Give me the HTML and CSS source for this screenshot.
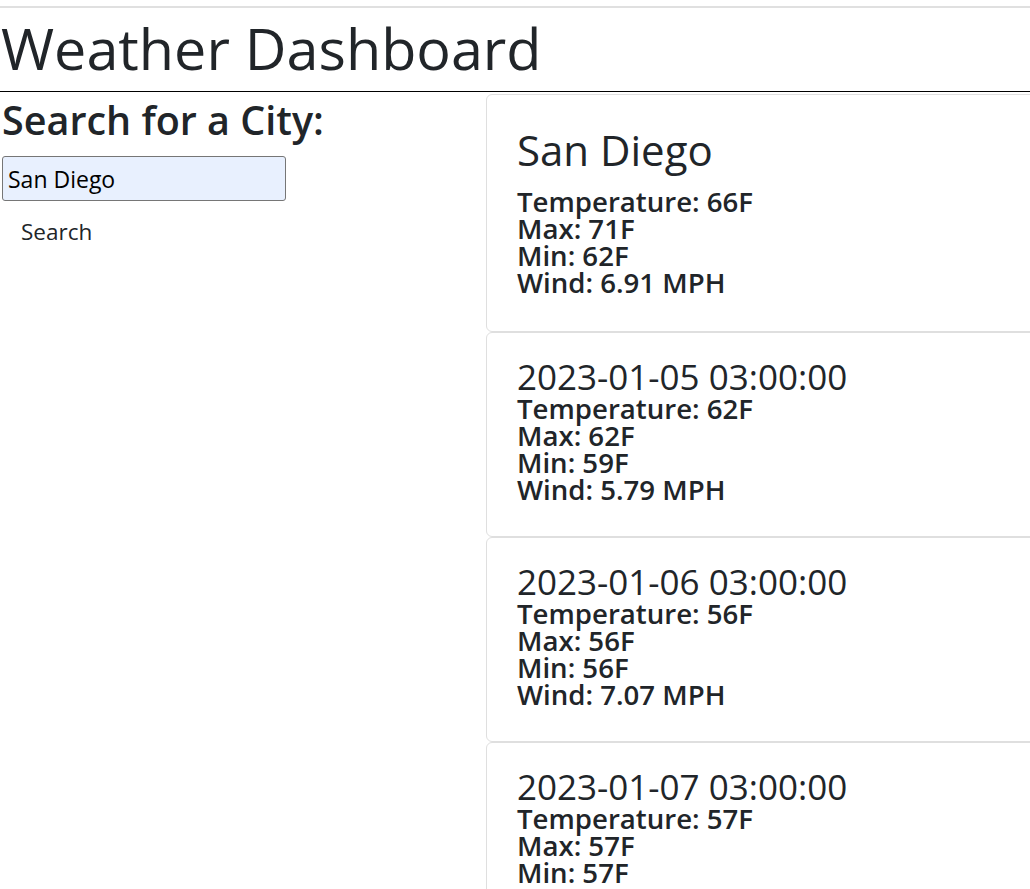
FILE: index.html
```html
<!DOCTYPE html>
<html lang="en">
<head>
<meta charset="utf-8">
<title>Weather Dashboard</title>
<link rel="stylesheet" href="styles.css">
</head>
<body>
<hr class="top-rule">
<header class="masthead">
  <h1 class="title">Weather Dashboard</h1>
</header>
<main class="layout">
  <section class="search">
    <h2 class="search-heading">Search for a City:</h2>
    <input class="city-input" type="text" value="San Diego">
    <button class="search-btn" type="button">Search</button>
  </section>
  <section class="forecast">
    <article class="card card-current">
      <h2 class="city-name">San Diego</h2>
      <div class="stats">
        <div>Temperature: 66F</div>
        <div>Max: 71F</div>
        <div>Min: 62F</div>
        <div>Wind: 6.91 MPH</div>
      </div>
    </article>
    <article class="card">
      <h3 class="day">2023-01-05 03:00:00</h3>
      <div class="stats">
        <div>Temperature: 62F</div>
        <div>Max: 62F</div>
        <div>Min: 59F</div>
        <div>Wind: 5.79 MPH</div>
      </div>
    </article>
    <article class="card">
      <h3 class="day">2023-01-06 03:00:00</h3>
      <div class="stats">
        <div>Temperature: 56F</div>
        <div>Max: 56F</div>
        <div>Min: 56F</div>
        <div>Wind: 7.07 MPH</div>
      </div>
    </article>
    <article class="card">
      <h3 class="day">2023-01-07 03:00:00</h3>
      <div class="stats">
        <div>Temperature: 57F</div>
        <div>Max: 57F</div>
        <div>Min: 57F</div>
        <div>Wind: 6.42 MPH</div>
      </div>
    </article>
  </section>
</main>
</body>
</html>
```

FILE: styles.css
```css
html, body {
  margin: 0;
  padding: 0;
  overflow: hidden;
}

body {
  font-family: "Open Sans", "Noto Sans", "Liberation Sans", sans-serif;
  color: #212529;
  background: #fff;
}

.top-rule {
  margin: 6px 0 0;
  border: 0;
  border-top: 2px solid #e0e0e0;
  height: 0;
}

.masthead {
  border-bottom: 1px solid #000;
}

.title {
  margin: 0;
  padding: 0 0 2px 1px;
  font-size: 57.5px;
  font-weight: 500;
  line-height: 81px;
}

.layout {
  display: flex;
  align-items: flex-start;
}

.search {
  flex: 0 0 486px;
  display: flex;
  flex-direction: column;
  align-items: flex-start;
  padding-top: 5px;
}

.search-heading {
  margin: 0 0 0 2px;
  font-size: 39.5px;
  font-weight: 600;
  line-height: 46px;
}

.city-input {
  margin: 13px 0 0 2px;
  box-sizing: border-box;
  width: 284px;
  height: 45px;
  padding: 0 5px;
  border: 1px solid #767676;
  border-radius: 3px;
  background: #e8f0fe;
  font-family: inherit;
  font-size: 23px;
  color: #000;
}

.search-btn {
  margin: 10px 0 0 2px;
  padding: 6px 19px;
  border: 0;
  background: transparent;
  font-family: inherit;
  font-size: 22.5px;
  color: #212529;
  line-height: 30px;
}

.forecast {
  flex: 0 0 600px;
  display: flex;
  flex-direction: column;
  padding-top: 2px;
}

.card {
  border: 1px solid #dfdfdf;
  border-radius: 6px;
  padding: 26px 30px 33px;
}

.city-name {
  margin: 0 0 10px;
  font-size: 42px;
  font-weight: 400;
  line-height: 57px;
}

.card-current {
  padding-bottom: 35px;
}

.day {
  margin: 0;
  font-size: 35px;
  font-weight: 400;
  line-height: 36px;
}

.stats {
  font-size: 27.6px;
  font-weight: 600;
  line-height: 27px;
}
```
